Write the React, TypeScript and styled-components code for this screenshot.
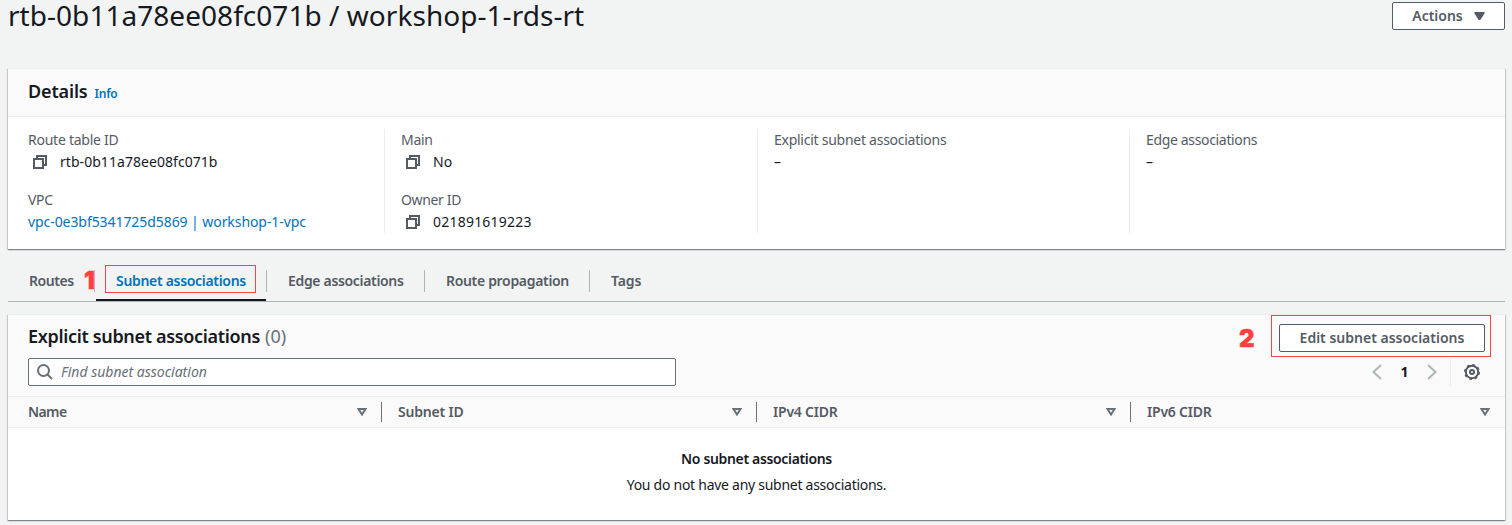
import React from 'react';
import styled, { createGlobalStyle, css } from 'styled-components';

const Global = createGlobalStyle`
  * { box-sizing: border-box; }
  body {
    margin: 0;
    background: #f2f3f3;
    color: #16191f;
    font-family: "Noto Sans", "Open Sans", sans-serif;
    font-size: 14px;
    line-height: 22px;
  }
`;

const Text = styled.span<{ $track?: number }>`
  letter-spacing: ${(p) => p.$track ?? 0}px;
  white-space: nowrap;
`;

const Page = styled.main`
  height: 525px;
  padding: 0 7px 0 8px;
`;

const PageHeader = styled.header`
  display: flex;
  justify-content: space-between;
  align-items: flex-start;
  height: 68px;
`;

const Title = styled.h1`
  margin: 0;
  font-size: 28px;
  font-weight: 400;
  line-height: 30px;
  letter-spacing: 0.04px;
`;

const Button = styled.button<{ $width: number }>`
  display: flex;
  align-items: center;
  justify-content: center;
  gap: 11px;
  width: ${(p) => p.$width}px;
  height: 28px;
  padding: 0;
  border: 1px solid #545b64;
  border-radius: 2px;
  background: #fff;
  color: #545b64;
  font: 600 14px/22px "Noto Sans", sans-serif;
`;

const HeaderAction = styled.div`
  padding-top: 2px;
`;

const Panel = styled.section`
  background: #fff;
  border-top: 1px solid #eaeded;
  box-shadow: 0 1px 1px 0 rgba(0, 28, 36, 0.3), 1px 1px 1px 0 rgba(0, 28, 36, 0.15),
    -1px 1px 1px 0 rgba(0, 28, 36, 0.15);
`;

const PanelHeading = styled.div`
  display: flex;
  align-items: baseline;
  gap: 7px;
  height: 48px;
  padding: 11px 20px 0;
  background: #fafafa;
  border-bottom: 1px solid #eaeded;
`;

const Heading = styled.h2`
  margin: 0;
  font-size: 18px;
  font-weight: 600;
  line-height: 22px;
`;

const InfoLink = styled.a`
  color: #0073bb;
  font-size: 12px;
  font-weight: 600;
`;

const Columns = styled.div`
  display: grid;
  grid-template-columns: 376px 373px 372px 1fr;
  height: 132px;
  padding: 12px 0 16px;
`;

const Column = styled.div<{ $first?: boolean }>`
  display: flex;
  flex-direction: column;
  gap: 16px;
  padding-left: ${(p) => (p.$first ? 20 : 16)}px;
  ${(p) => !p.$first && css`border-left: 1px solid #eaeded;`}
`;

const Field = styled.div`
  display: flex;
  flex-direction: column;
  height: 44px;
`;

const Label = styled(Text)`
  color: #545b64;
`;

const Value = styled.div<{ $link?: boolean }>`
  display: flex;
  align-items: center;
  color: ${(p) => (p.$link ? '#0073bb' : '#16191f')};
`;

const CopyIcon = styled.svg`
  width: 16px;
  height: 16px;
  margin: 0 12px 0 4px;
  fill: none;
  stroke: #545b64;
  stroke-width: 2;
  flex: none;
`;

const TabBar = styled.nav`
  display: flex;
  height: 53px;
  border-bottom: 1px solid #aab7b8;
  margin-bottom: 12px;
`;

const Tab = styled.div<{ $width: number; $active?: boolean }>`
  position: relative;
  display: flex;
  width: ${(p) => p.$width}px;
  padding: 21px 0 0 21px;
  font-weight: 600;
  color: ${(p) => (p.$active ? '#0073bb' : '#545b64')};
  &:not(:last-child)::after {
    content: '';
    position: absolute;
    right: 0;
    top: 21px;
    width: 1px;
    height: 22px;
    background: #aab7b8;
  }
`;

const ActiveLine = styled.div`
  position: absolute;
  left: 1px;
  right: 1px;
  bottom: 0;
  height: 2px;
  background: #16191f;
`;

const Outline = styled.div<{ $x: number; $y: number; $w: number; $h: number }>`
  position: absolute;
  left: ${(p) => p.$x}px;
  top: ${(p) => p.$y}px;
  width: ${(p) => p.$w}px;
  height: ${(p) => p.$h}px;
  border: 1px solid #fb4444;
`;

const StepNumber = styled.span<{ $x: number; $y: number }>`
  position: absolute;
  left: ${(p) => p.$x}px;
  top: ${(p) => p.$y}px;
  color: #fd3f3f;
  font: 900 24px/24px Inter, sans-serif;
  -webkit-text-stroke: 0.4px #fd3f3f;
`;

const TableHeader = styled.div`
  height: 81px;
  padding: 8px 20px 0;
  background: #fafafa;
`;

const TableTop = styled.div`
  display: flex;
  justify-content: space-between;
  height: 35px;
`;

const TableHeading = styled.div`
  display: flex;
  gap: 5px;
  padding-top: 2px;
`;

const Count = styled.span`
  color: #687078;
  font-size: 18px;
`;

const EditArea = styled.div`
  position: relative;
  padding-top: 1px;
`;

const ToolRow = styled.div`
  display: flex;
  justify-content: space-between;
`;

const SearchBox = styled.div`
  display: flex;
  align-items: center;
  gap: 8px;
  width: 648px;
  height: 28px;
  padding-left: 8px;
  border: 1px solid #687078;
  border-radius: 2px;
  background: #fff;
  color: #687078;
  font-style: italic;
`;

const Icon = styled.svg`
  width: 16px;
  height: 16px;
  fill: none;
  stroke: #687078;
  stroke-width: 2;
  flex: none;
`;

const GearIcon = styled(Icon)`
  stroke: #545b64;
`;

const Pager = styled.div`
  display: flex;
  align-items: center;
  height: 28px;
  padding-right: 5px;
`;

const Chevron = styled(Icon)`
  stroke: #aab7b8;
`;

const PageNumber = styled.span`
  width: 39px;
  text-align: center;
  font-weight: 700;
`;

const Settings = styled.div`
  display: flex;
  align-items: center;
  height: 28px;
  margin-left: 10px;
  padding-left: 13px;
  border-left: 1px solid #eaeded;
`;

const HeadRow = styled.div`
  display: grid;
  grid-template-columns: 374px 375px 374px 1fr;
  align-items: center;
  height: 32px;
  background: #fafafa;
  border-top: 1px solid #eaeded;
  border-bottom: 1px solid #eaeded;
`;

const HeadCell = styled.div<{ $first?: boolean; $last?: boolean }>`
  display: flex;
  align-items: center;
  justify-content: space-between;
  height: 20px;
  padding-left: ${(p) => (p.$first ? 20 : 16)}px;
  padding-right: ${(p) => (p.$last ? 15 : 14)}px;
  border-right: ${(p) => (p.$last ? 'none' : '1px solid #687078')};
  color: #545b64;
  font-weight: 600;
`;

const SortIcon = styled.svg`
  width: 10px;
  height: 8px;
  fill: none;
  stroke: #687078;
  stroke-width: 2;
`;

const CaretIcon = styled.svg`
  width: 11px;
  height: 8px;
  fill: #545b64;
`;

const Empty = styled.div`
  display: flex;
  flex-direction: column;
  align-items: center;
  gap: 4px;
  height: 92px;
  padding-top: 20px;
`;

const Strong = styled(Text)`
  font-weight: 600;
`;

const Copy = () => (
  <CopyIcon viewBox="0 0 16 16">
    <path d="M2 5h9v9H2z" />
    <path d="M5 5V2h9v9h-3" />
  </CopyIcon>
);

const headers: [string, number][] = [
  ['Name', -0.6],
  ['Subnet ID', -0.2],
  ['IPv4 CIDR', -0.2],
  ['IPv6 CIDR', -0.2],
];

export default function App() {
  return (
    <Page>
      <Global />
      <PageHeader>
        <Title>rtb-0b11a78ee08fc071b / workshop-1-rds-rt</Title>
        <HeaderAction>
          <Button $width={113}>
            <Text>Actions</Text>
            <CaretIcon viewBox="0 0 11 8"><path d="M.5 0h10v1.500L6.300 8H4.700L.5 1.500z" /></CaretIcon>
          </Button>
        </HeaderAction>
      </PageHeader>

      <Panel>
        <PanelHeading>
          <Heading><Text $track={-0.15}>Details</Text></Heading>
          <InfoLink><Text $track={-0.25}>Info</Text></InfoLink>
        </PanelHeading>
        <Columns>
          <Column $first>
            <Field>
              <Label $track={-0.25}>Route table ID</Label>
              <Value><Copy /><Text $track={0.05}>rtb-0b11a78ee08fc071b</Text></Value>
            </Field>
            <Field>
              <Label $track={-0.3}>VPC</Label>
              <Value $link><Text $track={-0.07}>vpc-0e3bf5341725d5869 | workshop-1-vpc</Text></Value>
            </Field>
          </Column>
          <Column>
            <Field>
              <Label $track={-0.3}>Main</Label>
              <Value><Copy /><Text>No</Text></Value>
            </Field>
            <Field>
              <Label $track={-0.36}>Owner ID</Label>
              <Value><Copy /><Text $track={0.22}>021891619223</Text></Value>
            </Field>
          </Column>
          <Column>
            <Field>
              <Label $track={-0.26}>Explicit subnet associations</Label>
              <Value>–</Value>
            </Field>
          </Column>
          <Column>
            <Field>
              <Label $track={-0.34}>Edge associations</Label>
              <Value>–</Value>
            </Field>
          </Column>
        </Columns>
      </Panel>

      <TabBar>
        <Tab $width={87}><Text $track={-0.45}>Routes</Text></Tab>
        <Tab $width={172} $active>
          <Text $track={-0.31}>Subnet associations</Text>
          <ActiveLine />
          <StepNumber $x={-11} $y={20}>1</StepNumber>
          <Outline $x={10} $y={16} $w={151} $h={28} />
        </Tab>
        <Tab $width={158}><Text $track={-0.33}>Edge associations</Text></Tab>
        <Tab $width={165}><Text $track={-0.32}>Route propagation</Text></Tab>
        <Tab $width={80}><Text $track={-0.1}>Tags</Text></Tab>
      </TabBar>

      <Panel>
        <TableHeader>
          <TableTop>
            <TableHeading>
              <Heading><Text $track={-0.33}>Explicit subnet associations</Text></Heading>
              <Count>(0)</Count>
            </TableHeading>
            <EditArea>
              <StepNumber $x={-40} $y={4}>2</StepNumber>
              <Button $width={206}><Text>Edit subnet associations</Text></Button>
              <Outline $x={-8} $y={-8} $w={220} $h={42} />
            </EditArea>
          </TableTop>
          <ToolRow>
            <SearchBox>
              <Icon viewBox="0 0 16 16"><circle cx="6.500" cy="6.500" r="5.500" /><path d="M10.500 10.500 15 15" /></Icon>
              <Text>Find subnet association</Text>
            </SearchBox>
            <Pager>
              <Chevron viewBox="0 0 16 16"><path d="M12 1 4.500 8l7.500 7" /></Chevron>
              <PageNumber>1</PageNumber>
              <Chevron viewBox="0 0 16 16"><path d="m4 1 7.500 7L4 15" /></Chevron>
              <Settings>
                <GearIcon viewBox="0 0 16 16">
                  <circle cx="8" cy="8" r="6.200" />
                  <circle cx="8" cy="8" r="7.300" strokeWidth="1.400" strokeDasharray="2.870 2.870" />
                  <circle cx="8" cy="8" r="2" />
                </GearIcon>
              </Settings>
            </Pager>
          </ToolRow>
        </TableHeader>
        <HeadRow>
          {headers.map(([name, track], i) => (
            <HeadCell key={name} $first={i === 0} $last={i === 3}>
              <Text $track={track}>{name}</Text>
              <SortIcon viewBox="0 0 10 8"><path d="M1.500 1h7L5 6.500z" /></SortIcon>
            </HeadCell>
          ))}
        </HeadRow>
        <Empty>
          <Strong $track={-0.34}>No subnet associations</Strong>
          <Text $track={-0.27}>You do not have any subnet associations.</Text>
        </Empty>
      </Panel>
    </Page>
  );
}
